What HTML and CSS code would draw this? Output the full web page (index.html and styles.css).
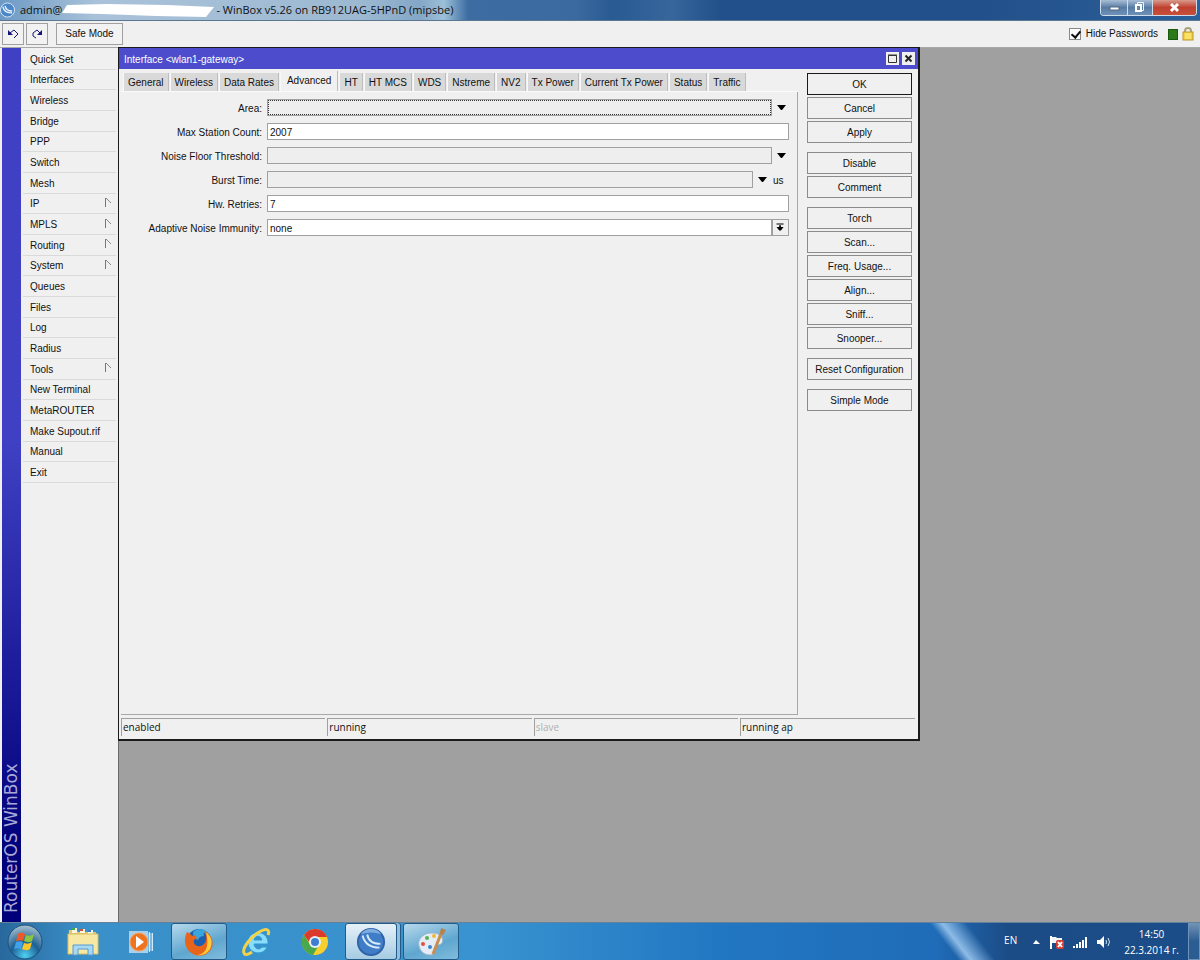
FILE: index.html
```html
<!DOCTYPE html>
<html lang="en">

<head>
    <meta charset="utf-8" />
    <title>WinBox v5.26 on RB912UAG-5HPnD (mipsbe)</title>
    <link rel="stylesheet" href="styles.css">
</head>

<body>
    <header class="titlebar">
        <svg class="app-icon" width="15" height="16" viewBox="0 0 32 32">
            <circle cx="16" cy="16" r="15" fill="#4a86c8" stroke="#dbe9f5" stroke-width="2" />
            <path d="M6 9c2 9 9 14 20 13M11 7c1 7 6 11 15 11" fill="none" stroke="#e8f3fc" stroke-width="3" />
        </svg>
        <h1 class="title">
            <span>admin@</span>
            <svg class="erased" width="152" height="20" viewBox="0 0 152 20">
                <path d="M5 5l40-1 60 1 47 2-8 10-50-1-54-2-40-1z" fill="#fff" />
            </svg>
            <span>- WinBox v5.26 on RB912UAG-5HPnD (mipsbe)</span>
        </h1>
        <div class="caption">
            <button class="cap" aria-label="Minimize"><svg width="26" height="15"><rect x="9" y="7" width="9" height="3" fill="#fff" stroke="#536a85" stroke-width="1" /></svg></button>
            <button class="cap" aria-label="Restore"><svg width="24" height="15"><path d="M9.500 2.500h6v8h-6z" fill="none" stroke="#eef3f8" /><path d="M8 5h5v6H8z" fill="#6484a8" stroke="#fff" stroke-width="2" /></svg></button>
            <button class="cap cap-close" aria-label="Close"><svg width="43" height="15"><path d="M18 4l7 7M25 4l-7 7" stroke="#fff" stroke-width="3" /></svg></button>
        </div>
    </header>

    <div class="toolbar">
        <button class="tool" aria-label="Undo"><svg width="14" height="14" viewBox="0 0 14 14"><path d="M2 3v5h5z" fill="#14147a" /><path d="M4 6l4-3 4 4-4 4" fill="none" stroke="#14147a" /></svg></button>
        <button class="tool" aria-label="Redo"><svg width="14" height="14" viewBox="0 0 14 14"><path d="M12 3v5H7z" fill="#14147a" /><path d="M10 6L7 3 3 6v3l3 2" fill="none" stroke="#14147a" /></svg></button>
        <button class="tool safe">Safe Mode</button>
        <label class="hide"><input type="checkbox" checked> Hide Passwords</label>
        <span class="load"></span>
        <svg class="lock" width="12" height="14" viewBox="0 0 12 14">
            <path d="M3 7V4a3 3 0 0 1 6 0v3" fill="none" stroke="#a9a27a" stroke-width="2" />
            <rect x="1" y="5" width="10" height="8" fill="#f6d23c" stroke="#b9982a" />
            <path d="M3 7h6M3 9h6M3 11h6" stroke="#fdf0a0" />
        </svg>
    </div>

    <main class="workspace">
        <div class="brand"><span>RouterOS WinBox</span></div>
        <nav class="menu">
            <a href="#">Quick Set</a>
            <a href="#">Interfaces</a>
            <a href="#">Wireless</a>
            <a href="#">Bridge</a>
            <a href="#">PPP</a>
            <a href="#">Switch</a>
            <a href="#">Mesh</a>
            <a href="#" class="sub">IP</a>
            <a href="#" class="sub">MPLS</a>
            <a href="#" class="sub">Routing</a>
            <a href="#" class="sub">System</a>
            <a href="#">Queues</a>
            <a href="#">Files</a>
            <a href="#">Log</a>
            <a href="#">Radius</a>
            <a href="#" class="sub">Tools</a>
            <a href="#">New Terminal</a>
            <a href="#">MetaROUTER</a>
            <a href="#">Make Supout.rif</a>
            <a href="#">Manual</a>
            <a href="#">Exit</a>
        </nav>

        <div class="desktop">
            <section class="window">
                <div class="window-title">
                    <h2>Interface &lt;wlan1-gateway&gt;</h2>
                    <button aria-label="Maximize"><svg width="13" height="13"><path d="M2.500 3.500h8v7h-8zM2 3h9" fill="none" stroke="#333" /></svg></button>
                    <button aria-label="Close"><svg width="13" height="13"><path d="M3.500 3.500l6 6M9.500 3.500l-6 6" stroke="#222" stroke-width="2" /></svg></button>
                </div>
                <div class="window-body">
                    <div class="panel">
                        <div class="tabs">
                            <button>General</button>
                            <button>Wireless</button>
                            <button>Data Rates</button>
                            <button class="active">Advanced</button>
                            <button>HT</button>
                            <button>HT MCS</button>
                            <button>WDS</button>
                            <button>Nstreme</button>
                            <button>NV2</button>
                            <button>Tx Power</button>
                            <button>Current Tx Power</button>
                            <button>Status</button>
                            <button>Traffic</button>
                        </div>
                        <form class="fields">
                            <label for="area">Area:</label>
                            <div class="field">
                                <select id="area" class="unset focus"><option></option></select>
                                <svg class="arrow" width="17" height="17"><path d="M5 6h9l-4 5h-1z" /></svg>
                            </div>
                            <label for="stations">Max Station Count:</label>
                            <div class="field"><input id="stations" type="text" value="2007"></div>
                            <label for="noise">Noise Floor Threshold:</label>
                            <div class="field">
                                <select id="noise" class="unset"><option></option></select>
                                <svg class="arrow" width="17" height="17"><path d="M5 6h9l-4 5h-1z" /></svg>
                            </div>
                            <label for="burst">Burst Time:</label>
                            <div class="field">
                                <select id="burst" class="unset"><option></option></select>
                                <svg class="arrow" width="17" height="17"><path d="M5 6h9l-4 5h-1z" /></svg>
                                <span class="unit">us</span>
                            </div>
                            <label for="retries">Hw. Retries:</label>
                            <div class="field"><input id="retries" type="text" value="7"></div>
                            <label for="immunity">Adaptive Noise Immunity:</label>
                            <div class="field">
                                <select id="immunity"><option>none</option></select>
                                <svg class="arrow boxed" width="17" height="17" viewBox="1 0 17 17"><path d="M5 4h8v1H5zM8 6h2v2h3l-3 4H8L5 8h3z" /></svg>
                            </div>
                        </form>
                    </div>
                    <aside class="actions">
                        <div class="group">
                            <button class="default">OK</button>
                            <button>Cancel</button>
                            <button>Apply</button>
                        </div>
                        <div class="group">
                            <button>Disable</button>
                            <button>Comment</button>
                        </div>
                        <div class="group">
                            <button>Torch</button>
                            <button>Scan...</button>
                            <button>Freq. Usage...</button>
                            <button>Align...</button>
                            <button>Sniff...</button>
                            <button>Snooper...</button>
                        </div>
                        <div class="group">
                            <button>Reset Configuration</button>
                        </div>
                        <div class="group">
                            <button>Simple Mode</button>
                        </div>
                    </aside>
                </div>
                <footer class="status">
                    <span>enabled</span>
                    <span>running</span>
                    <span class="off">slave</span>
                    <span>running ap</span>
                </footer>
            </section>
        </div>
    </main>

    <footer class="taskbar">
        <button class="start" aria-label="Start">
            <svg width="36" height="36" viewBox="0 0 36 36">
                <defs>
                    <radialGradient id="orb" cx="50%" cy="90%" r="85%">
                        <stop offset="0" stop-color="#4fd0f2" />
                        <stop offset="0.500" stop-color="#1c5f93" />
                        <stop offset="1" stop-color="#9db9cc" />
                    </radialGradient>
                </defs>
                <circle cx="18" cy="18" r="17" fill="url(#orb)" stroke="#1d4f78" />
                <path d="M11 10c3-2 5-1 7 0l-2 7c-2-1-4-1-7 0z" fill="#ee5a26" />
                <path d="M19 11c3 1 5 1 8-1l-2 7c-3 2-5 1-8 0z" fill="#8cc63f" />
                <path d="M9 18c3-1 5-1 7 0l-2 7c-2-1-4-1-7 0z" fill="#3fa2ea" />
                <path d="M17 19c3 1 5 1 8-1l-2 7c-3 2-5 1-8 0z" fill="#fdc727" />
            </svg>
        </button>
        <button class="task" aria-label="Explorer">
            <svg width="32" height="30" viewBox="0 0 32 30">
                <path d="M2 3h7l2 2h18l1 22H1z" fill="#e6c86c" />
                <path d="M5 1h5v5H5zM13 2h5v4h-5zM21 3h5v4h-5z" fill="#f8f5dd" />
                <path d="M5 1h3v2H5z" fill="#3da84c" /><path d="M13 2h3v2h-3z" fill="#d6503a" /><path d="M21 3h3v2h-3z" fill="#3977c9" />
                <path d="M1 7h30v20H1z" fill="#f7e9a4" stroke="#d9bd62" />
                <path d="M6 28V18h20v10h-5v-6H11v6z" fill="#a7d9f2" stroke="#559bd0" />
            </svg>
        </button>
        <button class="task" aria-label="Media Player">
            <svg width="26" height="24" viewBox="0 0 26 24">
                <path d="M20 3h4v18h-4z" fill="#79b8e3" /><path d="M21.500 2v20M24.500 3v18" stroke="#d3ebf9" />
                <rect x="1" y="1" width="19" height="22" fill="#a9cfe9" />
                <circle cx="11" cy="12" r="9" fill="#ee7420" stroke="#f6a260" />
                <path d="M8 6l8 6-8 6z" fill="#fff" />
            </svg>
        </button>
        <button class="task open" aria-label="Firefox">
            <svg width="30" height="30" viewBox="0 0 30 30">
                <circle cx="15" cy="14" r="12" fill="#1d5fae" />
                <path d="M9 5c4-4 10-4 14 0-3 0-4 2-3 4-3 0-5 1-6 4-3-1-5-4-5-8z" fill="#3aa4dc" />
                <path d="M3 5c2 1 4 2 5 4 3-1 4 0 5 2-2 1-4 2-3 5 1 3 6 5 10 1 3-3 3-8 0-13 7 3 10 10 8 16-3 8-12 11-19 7C1 23-1 13 3 5z" fill="#e8641b" />
                <path d="M22 5c6 5 7 11 4 17-3 5-8 7-13 6 8-1 13-7 9-23z" fill="#fcca3a" />
            </svg>
        </button>
        <button class="task" aria-label="Internet Explorer">
            <svg width="32" height="30" viewBox="0 0 32 30">
                <path d="M26 20c-3 9-19 8-19-5C7 2 28 2 27 17H13c1 6 6 6 8 3zM13 13h8c-1-5-7-5-8 0z" fill="#8adcf8" fill-rule="evenodd" stroke="#2d9ad6" />
                <path d="M27 8c2-5-1-7-7-4C10 9 1 21 3 26c1 3 5 1 8-1" fill="none" stroke="#f3d24a" stroke-width="3" />
            </svg>
        </button>
        <button class="task" aria-label="Chrome">
            <svg width="28" height="28" viewBox="0 0 28 28">
                <circle cx="14" cy="14" r="13" fill="#f8cf2c" />
                <path d="M3 7a13 13 0 0 1 23 2H14c-3 0-5 2-6 5z" fill="#dd3a2e" />
                <path d="M3 7a13 13 0 0 0 9 20l6-10c-3 3-8 2-10-2z" fill="#4aa84c" />
                <circle cx="14" cy="14" r="6" fill="#e8f1f8" /><circle cx="14" cy="14" r="4" fill="#3c7fd0" />
            </svg>
        </button>
        <button class="task open current" aria-label="WinBox">
            <svg width="30" height="30" viewBox="0 0 32 32">
                <circle cx="16" cy="16" r="14" fill="#3f7dc6" stroke="#2f62a8" stroke-width="2" />
                <path d="M5 8a13 13 0 0 1 22 0c-6-3-16-3-22 0z" fill="#7eaee0" />
                <path d="M7 9c2 8 8 13 18 13M12 8c1 6 6 10 14 10" fill="none" stroke="#d8ebfa" stroke-width="2" />
            </svg>
        </button>
        <button class="task open" aria-label="Paint">
            <svg width="30" height="30" viewBox="0 0 30 30">
                <path d="M3 19c-2-7 5-14 14-13 8 0 11 6 9 10-2 3-6 1-7 4-1 4 0 8-5 8-6 0-10-4-11-9z" fill="#e4edf5" stroke="#9db6ca" />
                <circle cx="7" cy="17" r="2" fill="#e05040" /><circle cx="11" cy="11" r="2" fill="#58b050" /><circle cx="18" cy="9" r="2" fill="#edbb30" /><circle cx="14" cy="20" r="2" fill="#3f82d0" />
                <path d="M26 4l-9 23" stroke="#c98d4c" stroke-width="3" /><path d="M24 7l1-6 5 2-3 5z" fill="#b4824f" />
            </svg>
        </button>
        <div class="tray">
            <span class="lang">EN</span>
            <svg width="9" height="6"><path d="M1 5l3-4 4 4z" fill="#fff" /></svg>
            <svg width="14" height="16" viewBox="0 0 14 16">
                <path d="M1 2v13" stroke="#fff" stroke-width="2" /><path d="M2 3h4l1 1h5v6H7L6 9H2z" fill="#f2f5f8" />
                <rect x="6" y="6" width="8" height="9" rx="2" fill="#d83b34" /><path d="M8 8l4 5M12 8l-4 5" stroke="#fff" stroke-width="2" />
            </svg>
            <svg width="14" height="14" viewBox="0 0 14 14"><path d="M0 11h2v2H0zM3 9h2v4H3zM6 7h2v6H6zM9 5h2v8H9zM12 2h2v11h-2z" fill="#fff" /></svg>
            <svg width="15" height="14" viewBox="0 0 15 14"><path d="M1 5h3l4-4v12L4 9H1z" fill="#fff" /><path d="M10 5q1 2 0 4M12 3q3 4 0 8" fill="none" stroke="#d6e5f2" /></svg>
            <time class="clock">14:50<br>22.3.2014 г.</time>
            <button class="peek" aria-label="Show desktop"></button>
        </div>
    </footer>
</body>

</html>
```
FILE: styles.css
```css
* {
    box-sizing: border-box;
}

body {
    display: flex;
    flex-direction: column;
    min-height: 100vh;
    margin: 0;
    background: #f0f0f0;
    color: #111;
    font: 10px/14px "Liberation Sans", Arial, sans-serif;
}

button,
input,
select {
    margin: 0;
    padding: 0;
    color: inherit;
    font: inherit;
}

svg {
    display: block;
    flex: none;
}

/* title bar */
.titlebar {
    display: flex;
    align-items: center;
    height: 21px;
    border-bottom: 1px solid #5c7891;
    background: linear-gradient(90deg, #6d9ac4 0, #a9c2d9 8%, #9db9d2 30%, #84a7c7 35%, #9cc0d8 37%, #3c6ca2 39%, #3a6a9f 48%, #295a92 51%, #36669c 56%, #22508a 60%, #22508a 82%, #2c6099 100%);
}

.title {
    display: flex;
    flex: 1;
    align-items: center;
    margin: 0 0 0 5px;
    font: 11px/20px "Open Sans", "Noto Sans", sans-serif;
}

.erased {
    margin-right: 2px;
}

.caption {
    display: flex;
    align-self: flex-start;
    margin-right: 3px;
    border: 1px solid #cfdcea;
    border-top: 0;
    border-radius: 0 0 4px 4px;
    overflow: hidden;
}

.cap {
    height: 15px;
    border: 0;
    border-right: 1px solid #cfdcea;
    background: linear-gradient(#a9bed6, #587ba4 50%, #6d91b8);
}

.cap-close {
    border-right: 0;
    background: linear-gradient(#d99a8c, #c04030 50%, #c8503a);
}

/* toolbar */
.toolbar {
    display: flex;
    align-items: center;
    height: 27px;
    padding: 0 6px 0 2px;
    border-bottom: 1px solid #a8a8a8;
}

.tool {
    display: flex;
    align-items: center;
    justify-content: center;
    width: 22px;
    height: 22px;
    margin-right: 2px;
    border: 1px solid #a0a0a0;
    background: #f2f2f2;
}

.safe {
    width: 67px;
    margin-left: 6px;
}

.hide {
    display: flex;
    align-items: center;
    gap: 5px;
    margin-left: auto;
}

.hide input {
    width: 12px;
    height: 12px;
    appearance: none;
    border: 1px solid #888;
    background: #fff;
}

.hide input:checked::before {
    content: "";
    display: block;
    width: 4px;
    height: 7px;
    margin: 0 0 0 3px;
    border: solid #111;
    border-width: 0 2px 2px 0;
    transform: rotate(40deg);
}

.load {
    width: 10px;
    height: 11px;
    margin: 0 4px 0 10px;
    border: 1px solid #185a10;
    background: #2b7a18;
}

/* workspace */
.workspace {
    display: flex;
    flex: 1;
}

/* rotated half a turn, so the gradient and the padding start at the bottom */
.brand {
    width: 19px;
    margin-left: 2px;
    padding-top: 9px;
    background: linear-gradient(#00007a 8%, #4040c4 55%);
    color: #a9a9d6;
    font: 17px/19px "DejaVu Sans", Verdana, sans-serif;
    writing-mode: vertical-rl;
    transform: rotate(180deg);
}

.menu {
    display: grid;
    align-self: flex-start;
    grid-auto-rows: 1fr;
    width: 97px;
    height: 435px;
    padding: 1px 2px 0 2px;
}

.menu a {
    display: flex;
    align-items: center;
    padding: 2px 0 0 7px;
    border-bottom: 1px solid #dadada;
    color: inherit;
    text-decoration: none;
}

.menu .sub::after {
    content: "";
    width: 5px;
    height: 9px;
    margin: 0 5px 4px auto;
    border-left: 1px solid #777;
    background: linear-gradient(45deg, transparent 42%, #888 43%, #888 57%, transparent 58%) top / 5px 5px no-repeat;
}

.desktop {
    position: relative;
    flex: 1;
    border-left: 1px solid #6c6c6c;
    background: #a0a0a0;
}

/* interface window */
.window {
    position: absolute;
    top: -1px;
    left: -1px;
    display: flex;
    flex-direction: column;
    width: 802px;
    height: 694px;
    border: 1px solid #1a1a1a;
    border-width: 1px 2px 2px 1px;
    background: #f0f0f0;
}

.window-title {
    display: flex;
    align-items: center;
    gap: 3px;
    height: 21px;
    padding: 0 3px 0 5px;
    background: #4c4ccc;
    color: #fff;
}

.window-title h2 {
    flex: 1;
    margin: 0;
    font: inherit;
    line-height: 16px;
    padding-top: 2px;
}

.window-title button {
    width: 13px;
    height: 13px;
    border: 0;
    background: #f0f0f0;
}

.window-body {
    display: flex;
    flex: 1;
}

.panel {
    flex: 1;
    margin: 3px 9px 3px 2px;
    border-bottom: 1px solid #a8a8a8;
    background: linear-gradient(#a8a8a8, #a8a8a8) right 20px / 1px 100% no-repeat;
}

.tabs {
    display: flex;
    align-items: flex-end;
    gap: 1px;
    height: 20px;
    padding-left: 2px;
    border-bottom: 1px solid #fafafa;
}

.tabs button {
    height: 18px;
    padding: 2px 4px 0;
    border: 0;
    border-right: 1px solid #bdbdbd;
    border-left: 1px solid #f8f8f8;
    background: #d9d9d9;
}

.tabs .active {
    height: 20px;
    padding: 0 6px 1px;
    background: #f0f0f0;
}

.fields {
    display: grid;
    grid-template-columns: 141px 1fr;
    gap: 7px 5px;
    padding: 7px 9px 0 0;
}

.fields label {
    height: 17px;
    line-height: 19px;
    text-align: right;
}

.field {
    display: flex;
    height: 17px;
}

.field input,
.field select {
    flex: 1;
    min-width: 0;
    height: 17px;
    padding: 2px 2px 0;
    appearance: none;
    border: 1px solid #a0a0a0;
    border-radius: 0;
    background: #fff;
}

.field .unset {
    background: #eee;
}

.field .focus {
    outline: 1px dotted #333;
    outline-offset: -2px;
}

.boxed {
    border: 1px solid #a0a0a0;
}

.unit {
    width: 19px;
    padding-left: 3px;
    line-height: 19px;
}

.actions {
    display: flex;
    flex-direction: column;
    gap: 9px;
    width: 111px;
    padding: 4px 6px 0 0;
}

.group {
    display: grid;
    gap: 2px;
}

.actions button {
    height: 22px;
    padding-top: 1px;
    border: 1px solid #8c8c8c;
    background: #f0f0f0;
}

.actions .default {
    border-color: #1a1a1a;
}

.status {
    display: grid;
    grid-template-columns: repeat(3, 1fr) 175px;
    gap: 2px;
    padding: 0 3px 3px 2px;
    font: 10px/17px "Open Sans", "Noto Sans", sans-serif;
}

.status span {
    height: 18px;
    padding-left: 1px;
    border: solid #a0a0a0;
    border-width: 1px 0 0 1px;
}

.status .off {
    color: #b0b0b0;
}

/* taskbar */
.taskbar {
    display: flex;
    align-items: center;
    height: 38px;
    padding-left: 6px;
    border-top: 1px solid #64819b;
    background: linear-gradient(52deg, transparent 78%, #8dbbe6 79%, transparent 81%), linear-gradient(90deg, #28689c 0, #3a90c8 7%, #3893d0 40%, #2277c2 60%, #1f6cb8 78%, #1c4c86 84%, #1b4d88 100%);
}

.taskbar button {
    display: flex;
    align-items: center;
    justify-content: center;
    height: 37px;
    border: 0;
    background: none;
}

.taskbar .start {
    width: 38px;
    margin-right: 11px;
}

.taskbar .task {
    width: 56px;
    margin-right: 2px;
}

.taskbar .open {
    border: 1px solid #245a88;
    border-radius: 3px;
    background: linear-gradient(160deg, #b7d9ec, #5fa6cf 60%, #80bddd);
}

.taskbar .current {
    width: 52px;
    margin-right: 6px;
    background: linear-gradient(#e6f1f8, #a5cbe3);
    box-shadow: 3px 0 0 #8fbfdd, 4px 0 0 #245a88;
}

.tray {
    display: flex;
    align-items: center;
    gap: 9px;
    height: 37px;
    margin-left: auto;
    color: #fff;
    font: 10px/16px "Open Sans", "Noto Sans", sans-serif;
}

.lang {
    padding: 0 6px 4px 0;
}

.clock {
    padding-left: 4px;
    text-align: center;
}

.tray .peek {
    width: 12px;
    border: 1px solid #6d93b8;
    background: linear-gradient(#6f91b3, #2b5c92 50%);
}
```
